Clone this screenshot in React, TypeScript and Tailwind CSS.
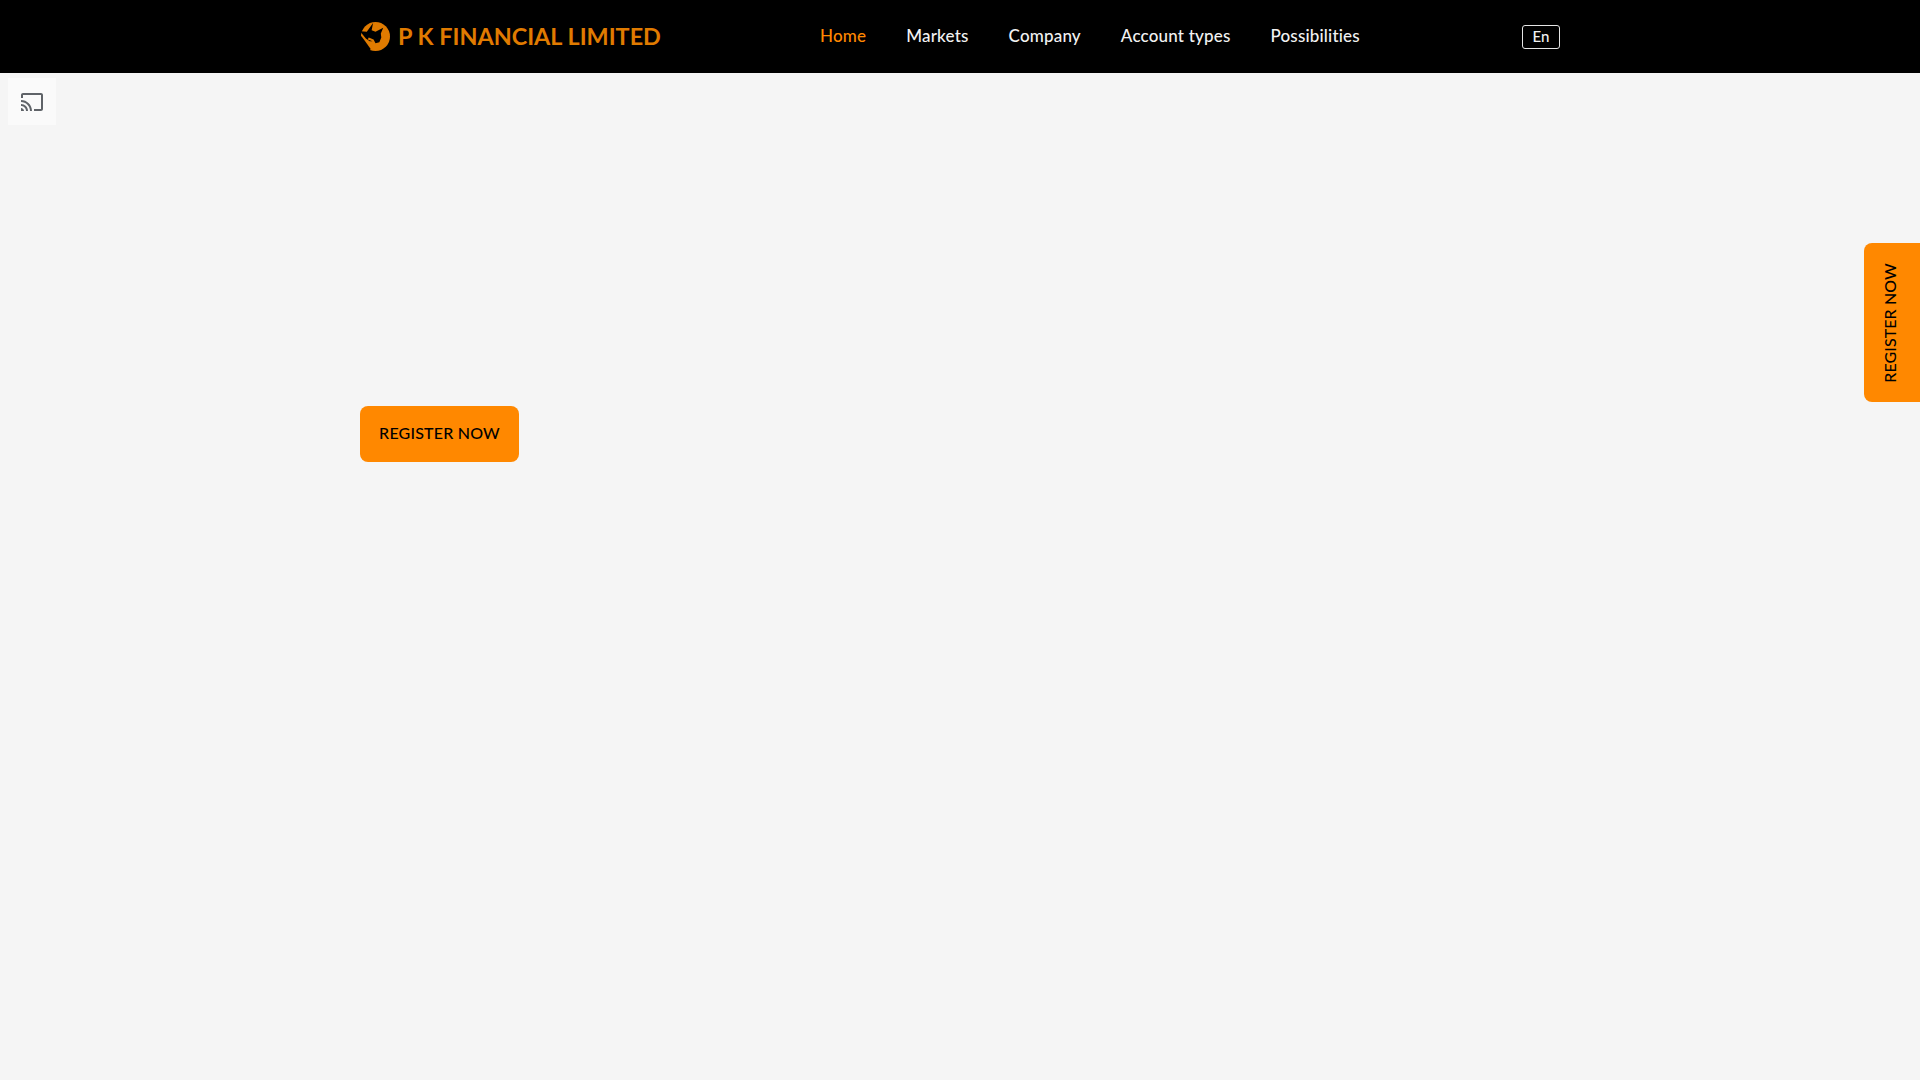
export default function App() {
  const font = "font-['Lato','Liberation_Sans',sans-serif]";
  return (
    <div className={`relative h-[1080px] w-full overflow-hidden bg-[#f5f5f5] ${font}`}>
      <header className="h-[73px] bg-black">
        <div className="mx-auto flex h-full w-[1200px] items-center">
          <div className="flex w-[460px] items-center gap-[8px] pl-[1px]">
            <svg width="29" height="29" viewBox="0 0 30 30" className="shrink-0">
              <circle cx="15" cy="15" r="15" fill="#e07b00" />
              <path d="M-1 9.500 L6 10 L12.500 1 L11 8.500 L15 10 L23 6 L20.500 12 L21 16 L19 21 L15 22 L13 18 L8 16 L7 18 L12 20 L9 20 L5 17 Z" fill="#000" />
              <path d="M-1 13 L3 18 L10 28 L8 31 L-1 31 Z" fill="#000" />
            </svg>
            <span className="text-[23.4px] leading-none font-bold whitespace-nowrap text-[#e07b00]">P K FINANCIAL LIMITED</span>
          </div>
          <nav className="-mt-[2px] flex items-center gap-[40px] text-[17px] font-medium tracking-[0.18px] text-[#f2f2f2]">
            <a className="text-[#ff8800]">Home</a>
            <a>Markets</a>
            <a>Company</a>
            <a>Account types</a>
            <a>Possibilities</a>
          </nav>
          <button className="ml-auto flex h-[24px] w-[38px] items-center justify-center rounded-[3px] border border-[#e5e5e5] text-[15px] font-medium text-[#f2f2f2]">En</button>
        </div>
      </header>
      <main className="mx-auto w-[1200px] pt-[333px]">
        <button className="flex h-[56px] w-[159px] items-center justify-center rounded-[8px] bg-[#ff8800] pb-[3px] text-[16px] font-medium tracking-[0.2px] text-black">REGISTER NOW</button>
      </main>
      <div className="absolute top-[78px] left-[8px] flex h-[47px] w-[48px] items-center justify-center bg-[#fafafa]">
        <svg width="24" height="24" viewBox="0 0 24 24" fill="#5f6368">
          <path d="M1 18v3h3c0-1.660-1.340-3-3-3zm0-4v2c2.760 0 5 2.240 5 5h2c0-3.870-3.130-7-7-7zm0-4v2c4.970 0 9 4.030 9 9h2c0-6.080-4.930-11-11-11zm20-7H3c-1.100 0-2 .9-2 2v3h2V5h18v14h-7v2h7c1.100 0 2-.9 2-2V5c0-1.100-.9-2-2-2z" />
        </svg>
      </div>
      <div className="absolute top-[243px] right-0 flex h-[159px] w-[56px] items-center justify-center rounded-l-[8px] bg-[#ff8800] pr-[5px]">
        <span className="-rotate-90 text-[16px] font-medium tracking-[0.1px] whitespace-nowrap text-black">REGISTER NOW</span>
      </div>
    </div>
  );
}
